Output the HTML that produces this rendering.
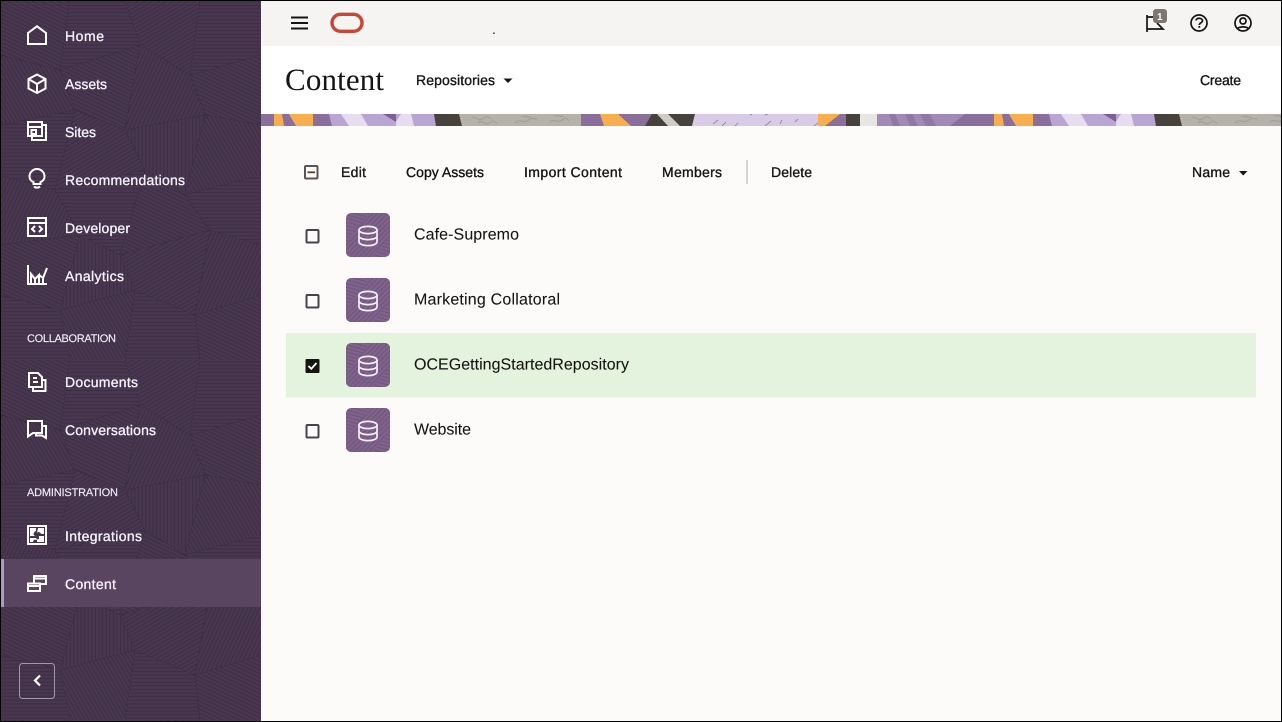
<!DOCTYPE html>
<html lang="en">
<head>
<meta charset="utf-8">
<title>Content</title>
<style>
html,body{margin:0;padding:0;width:1282px;height:722px;overflow:hidden;background:#000}
svg{display:block}
text{font-family:"Liberation Sans",Arial,sans-serif;text-rendering:geometricPrecision}
.n{font-size:14px;fill:#f6f1f8;stroke:#f6f1f8;stroke-width:.32}
.s{font-size:11px;fill:#f0ebf3;stroke:#f0ebf3;stroke-width:.15}
.t{font-size:14px;fill:#161513;stroke:#161513;stroke-width:.35}
.r{font-size:16px;fill:#161513;stroke:#161513;stroke-width:.08}
.i{fill:none;stroke:#fff;stroke-width:2}
.k{fill:none;stroke:#161513;stroke-width:1.7}
.c{fill:none;stroke:#45444c;stroke-width:2}
.d{fill:none;stroke:#f4eef6;stroke-width:1.7}
</style>
</head>
<body>
<svg width="1282" height="722" viewBox="0 0 1282 722" xmlns="http://www.w3.org/2000/svg">
<defs>
<pattern id="h1" width="3.6" height="3.6" patternUnits="userSpaceOnUse"><rect width="3.6" height="3.6" fill="#48374f"/><line x1="0" y1="1.8" x2="3.6" y2="1.8" stroke="#3d2e44" stroke-width="1"/></pattern>
<pattern id="h2" width="3.6" height="3.6" patternUnits="userSpaceOnUse" patternTransform="rotate(90)"><rect width="3.6" height="3.6" fill="#48374f"/><line x1="0" y1="1.8" x2="3.6" y2="1.8" stroke="#3d2e44" stroke-width="1"/></pattern>
<pattern id="h3" width="3.6" height="3.6" patternUnits="userSpaceOnUse" patternTransform="rotate(25)"><rect width="3.6" height="3.6" fill="#48374f"/><line x1="0" y1="1.8" x2="3.6" y2="1.8" stroke="#3d2e44" stroke-width="1"/></pattern>
<pattern id="h4" width="3.6" height="3.6" patternUnits="userSpaceOnUse" patternTransform="rotate(-30)"><rect width="3.6" height="3.6" fill="#48374f"/><line x1="0" y1="1.8" x2="3.6" y2="1.8" stroke="#3d2e44" stroke-width="1"/></pattern>
<pattern id="h5" width="3.6" height="3.6" patternUnits="userSpaceOnUse" patternTransform="rotate(60)"><rect width="3.6" height="3.6" fill="#48374f"/><line x1="0" y1="1.8" x2="3.6" y2="1.8" stroke="#3d2e44" stroke-width="1"/></pattern>
<pattern id="h6" width="3.6" height="3.6" patternUnits="userSpaceOnUse" patternTransform="rotate(-65)"><rect width="3.6" height="3.6" fill="#48374f"/><line x1="0" y1="1.8" x2="3.6" y2="1.8" stroke="#3d2e44" stroke-width="1"/></pattern>
<pattern id="mesh" width="261" height="360" patternUnits="userSpaceOnUse">
<polygon points="0,0 70,0 60,70 0,55" fill="url(#h3)"/>
<polygon points="70,0 125,0 140,45 60,70" fill="url(#h1)"/>
<polygon points="125,0 200,0 190,75 140,45" fill="url(#h4)"/>
<polygon points="200,0 261,0 261,55 190,75" fill="url(#h1)"/>
<polygon points="0,55 60,70 75,110 0,125" fill="url(#h5)"/>
<polygon points="60,70 140,45 125,130 75,110" fill="url(#h3)"/>
<polygon points="140,45 190,75 205,115 125,130" fill="url(#h6)"/>
<polygon points="190,75 261,55 261,125 205,115" fill="url(#h3)"/>
<polygon points="0,125 75,110 55,190 0,175" fill="url(#h1)"/>
<polygon points="75,110 125,130 145,170 55,190" fill="url(#h4)"/>
<polygon points="125,130 205,115 185,195 145,170" fill="url(#h2)"/>
<polygon points="205,115 261,125 261,175 185,195" fill="url(#h5)"/>
<polygon points="0,175 55,190 80,235 0,245" fill="url(#h6)"/>
<polygon points="55,190 145,170 120,255 80,235" fill="url(#h1)"/>
<polygon points="145,170 185,195 210,230 120,255" fill="url(#h3)"/>
<polygon points="185,195 261,175 261,245 210,230" fill="url(#h1)"/>
<polygon points="0,245 80,235 60,310 0,295" fill="url(#h3)"/>
<polygon points="80,235 120,255 135,290 60,310" fill="url(#h2)"/>
<polygon points="120,255 210,230 195,315 135,290" fill="url(#h4)"/>
<polygon points="210,230 261,245 261,295 195,315" fill="url(#h6)"/>
<polygon points="0,295 60,310 70,360 0,360" fill="url(#h1)"/>
<polygon points="60,310 135,290 125,360 70,360" fill="url(#h5)"/>
<polygon points="135,290 195,315 200,360 125,360" fill="url(#h1)"/>
<polygon points="195,315 261,295 261,360 200,360" fill="url(#h3)"/>
</pattern>
<pattern id="ta" width="3.5" height="3.5" patternUnits="userSpaceOnUse" patternTransform="rotate(15)"><rect width="3.5" height="3.5" fill="#7f638c"/><line x1="0" y1="1.7" x2="3.5" y2="1.7" stroke="#6e5379" stroke-width="1"/></pattern>
<pattern id="tb" width="3.5" height="3.5" patternUnits="userSpaceOnUse" patternTransform="rotate(-45)"><rect width="3.5" height="3.5" fill="#7f638c"/><line x1="0" y1="1.7" x2="3.5" y2="1.7" stroke="#6e5379" stroke-width="1"/></pattern>
<g id="tile">
<rect width="44" height="44" rx="5" fill="url(#ta)"/>
<path d="M24 0H39a5 5 0 0 1 5 5V24L26 44H5a5 5 0 0 1-5-5V30Z" fill="url(#tb)"/>
<ellipse cx="22" cy="17" rx="9" ry="3.600" class="d"/>
<path class="d" d="M13 17V29C13 31 17 32.600 22 32.600S31 31 31 29V17M13 23C13 25 17 26.600 22 26.600S31 25 31 23"/>
</g>
<g id="band">
<rect x="261" y="114" width="720" height="12" fill="#8a6f9c"/>
<polygon points="274,114 282,114 284,126 274,126" fill="#f8ae4c"/>
<polygon points="289,114 313,114 313,126 296,126" fill="#f8ae4c"/>
<polygon points="329,114 434,114 436,126 332,126" fill="#b9a5d4"/>
<polygon points="341,114 361,114 368,126 349,126" fill="#e7dcf0"/>
<polygon points="383,114 396,114 396,122" fill="#7c5f93"/>
<polygon points="396,122 401,114 411,114 414,126 396,126" fill="#e7dcf0"/>
<polygon points="434,114 459,114 462,126 436,126" fill="#47433c"/>
<polygon points="459,114 581,114 581,126 462,126" fill="#b5b2ac"/>
<path d="M472 118c4-3 6 4 10 1s6-3 9 0M478 123c4-4 7 3 11 0s6-2 8 1M515 123c5-5 8 1 12-2s5-3 10-2M522 117c3-2 6 1 9 0M550 122c5-4 7 2 12-2s5-1 7 1M555 116c3-1 5 1 8 0" fill="none" stroke="#a3a09a" stroke-width="1.200"/>
<polygon points="581,114 600,114 600,126 587,126" fill="#8a6f9c"/>
<polygon points="600,114 618,114 631,126 604,126" fill="#f8ae4c"/>
<polygon points="645,126 652,114 695,114 692,126" fill="#47433c"/>
<polygon points="657,114 668,114 680,126 668,126" fill="#cfccc7"/>
<polygon points="695,114 818,114 818,126 692,126" fill="#d9cbe8"/>
<path d="M713 124l5-4M722 126l4-4M735 126l3-3M765 126l6-5M780 124l2-4M795 122l3-3M818 123l-4 3M750 115l2-1M765 115l3-1" fill="none" stroke="#9a88a8" stroke-width="1"/>
<polygon points="818,114 840,114 825,126 818,126" fill="#f8ae4c"/>
<rect x="846" y="114" width="14" height="12" fill="#47433c"/>
<rect x="860" y="114" width="17" height="12" fill="#e8e6e3"/>
<rect x="877" y="114" width="88" height="12" fill="#a08ab8"/>
<polygon points="889,114 895,114 900,126 893,126" fill="#8f78a6"/>
<polygon points="905,114 912,114 918,126 910,126" fill="#8f78a6"/>
<polygon points="920,114 930,114 936,126 926,126" fill="#8f78a6"/>
<polygon points="950,126 960,118 965,114 965,126" fill="#8a6f9c"/>
</g>
<clipPath id="bc"><rect x="261" y="114" width="1020" height="12"/></clipPath>
</defs>

<rect width="1282" height="722" fill="#000"/>
<!-- sidebar -->
<rect x="1" y="1" width="260" height="720" fill="url(#mesh)"/>
<rect x="1" y="559" width="260" height="48" fill="#5a4560"/>
<rect x="1" y="559" width="3" height="48" fill="#ad99c4"/>

<path class="i" d="M28 44V33L37 26.300L46 33V44Z"/>
<path class="i" d="M37 74.500L45.500 79V88.500L37 93L28.500 88.500V79ZM28.500 79L37 84L45.500 79M37 84V93"/>
<path class="i" d="M28 122H42V136H28ZM28 127H42M31.500 130H36V134H31.500ZM42 125H46V140H32V136"/>
<path class="i" d="M33.500 184V182C31 181 29.500 179 29.500 176.500A7.500 7.500 0 0 1 44.500 176.500C44.500 179 43 181 40.500 182V184ZM34 186.500C35.500 188 38.500 188 40 186.500"/>
<path class="i" d="M28 218H46V236H28ZM28 223H46M35 226L32 229L35 232M39 226L42 229L39 232"/>
<path class="i" d="M28 265V284H47M31 284V274L35 279V284M35 279L39 275V284M39 275L43 278V284M43 278L47 268"/>
<path class="i" d="M29 373H38L42 377V387H29ZM33 378H37M33 382H38M43 380H45.500V391H33V387.500"/>
<path class="i" d="M28 421H42V433H33L28 436.500ZM42 426H46V438L42 435.500H36V433"/>
<path class="i" d="M28 526H46V544H28Z"/>
<path d="M30 528H36V531C33 532 33 535 35 536H30ZM38 528H44V534H41C40 531 37 532 37 533ZM30 538H36C37 540 39 540 39 538V536H44V542H37V540C35 539 33 540 33 542H30Z" fill="#fff"/>
<path class="i" d="M28 583.500H40V591H28ZM34 583V576H46V584H40M28 586H40M34 578.500H46"/>

<text class="n" x="65" y="41" textLength="39">Home</text>
<text class="n" x="65" y="89" textLength="42">Assets</text>
<text class="n" x="65" y="137" textLength="31">Sites</text>
<text class="n" x="65" y="185" textLength="120">Recommendations</text>
<text class="n" x="65" y="233" textLength="65">Developer</text>
<text class="n" x="65" y="281" textLength="59">Analytics</text>
<text class="s" x="27" y="342" textLength="89">COLLABORATION</text>
<text class="n" x="65" y="387" textLength="73">Documents</text>
<text class="n" x="65" y="435" textLength="91">Conversations</text>
<text class="s" x="27" y="496" textLength="91">ADMINISTRATION</text>
<text class="n" x="65" y="541" textLength="77">Integrations</text>
<text class="n" x="65" y="589" textLength="51">Content</text>

<rect x="19.500" y="663.500" width="35" height="35" rx="3" fill="none" stroke="#a597ab" stroke-width="1"/>
<path d="M40 675.500L35 680.500L40 685.500" fill="none" stroke="#fff" stroke-width="2.200"/>

<!-- top bar -->
<rect x="261" y="1" width="1020" height="45" fill="#f5f4f2"/>
<path d="M291 17.500H308M291 23H308M291 28.500H308" stroke="#161513" stroke-width="2" fill="none"/>
<rect x="332" y="14.300" width="30" height="17" rx="8.500" fill="none" stroke="#c74634" stroke-width="3.400"/>
<text x="492" y="34" font-size="14" fill="#161513">.</text>

<path d="M1147 15V32M1147 17H1154M1147 29H1163L1157 23" fill="none" stroke="#161513" stroke-width="1.700"/>
<rect x="1153" y="9" width="14" height="14" rx="3" fill="#7b7671"/>
<text x="1157" y="20" font-size="10" font-weight="bold" fill="#fff">1</text>
<circle cx="1199" cy="23" r="8" class="k"/>
<path class="k" d="M1196 20.500C1196 17.500 1202.500 17.500 1202.500 20.800C1202.500 22.800 1199.300 22.800 1199.300 25"/>
<rect x="1198.400" y="26" width="1.800" height="1.800" fill="#161513"/>
<circle cx="1243" cy="23" r="8" class="k"/>
<circle cx="1243" cy="21" r="3" class="k"/>
<path class="k" d="M1237.500 28.500C1240 26.300 1246 26.300 1248.500 28.500"/>

<!-- page header -->
<rect x="261" y="46" width="1020" height="68" fill="#fff"/>
<text x="285" y="90" font-size="31" textLength="99" style="font-family:'Liberation Serif',serif" fill="#161513">Content</text>
<text class="t" x="416" y="85" textLength="79">Repositories</text>
<path d="M503.500 78.500H512.500L508 83Z" fill="#161513"/>
<text class="t" x="1200" y="85" textLength="41">Create</text>

<!-- banner -->
<g clip-path="url(#bc)">
<use href="#band"/>
<use href="#band" x="720"/>
</g>

<!-- content -->
<rect x="261" y="126" width="1020" height="595" fill="#fcfbfa"/>

<rect x="305" y="166" width="12.500" height="12.500" rx="1" class="c" style="stroke:#5a5450"/>
<path d="M307.500 172.300H315" stroke="#5a3d2c" stroke-width="1.800"/>
<text class="t" x="341" y="177" textLength="25">Edit</text>
<text class="t" x="406" y="177" textLength="78">Copy Assets</text>
<text class="t" x="524" y="177" textLength="98">Import Content</text>
<text class="t" x="662" y="177" textLength="60">Members</text>
<rect x="746" y="160" width="2" height="24" fill="#d6d4d1"/>
<text class="t" x="771" y="177" textLength="41">Delete</text>
<text class="t" x="1192" y="177" textLength="38">Name</text>
<path d="M1239 171H1247.500L1243.200 175.500Z" fill="#161513"/>

<rect x="286" y="333" width="970" height="64.500" fill="#e4f3de"/>

<rect x="306.500" y="230" width="12" height="12.500" rx="1" class="c"/>
<rect x="306.500" y="295" width="12" height="12.500" rx="1" class="c"/>
<rect x="305.500" y="359" width="14" height="14" rx="1" fill="#161513"/>
<path d="M308.500 366L311.300 368.800L316.500 363" fill="none" stroke="#fff" stroke-width="1.800"/>
<rect x="306.500" y="425" width="12" height="12.500" rx="1" class="c"/>

<use href="#tile" x="346" y="213"/>
<use href="#tile" x="346" y="278"/>
<use href="#tile" x="346" y="343"/>
<use href="#tile" x="346" y="408"/>

<text class="r" x="414" y="239.600" textLength="105">Cafe-Supremo</text>
<text class="r" x="414" y="304.600" textLength="146">Marketing Collatoral</text>
<text class="r" x="414" y="369.600" textLength="215">OCEGettingStartedRepository</text>
<text class="r" x="414" y="434.600" textLength="57">Website</text>
</svg>
</body>
</html>
